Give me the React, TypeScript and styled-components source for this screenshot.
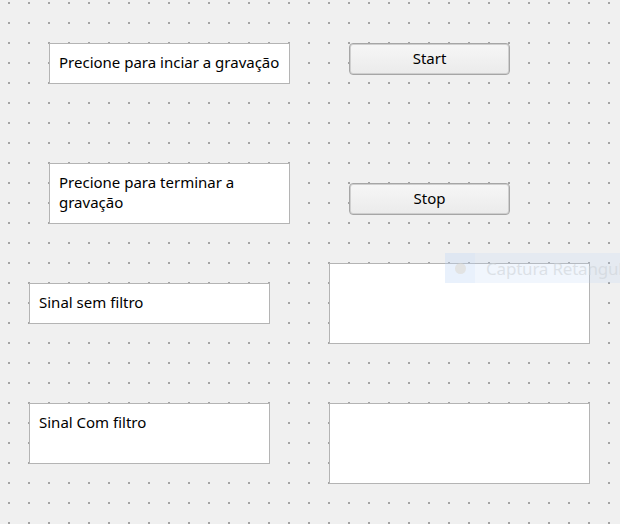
import React from "react";
import styled, { createGlobalStyle } from "styled-components";

const Global = createGlobalStyle`
  html, body {
    margin: 0;
    padding: 0;
    overflow: hidden;
    background: #f0f0f0;
  }
  * { box-sizing: border-box; }
`;

const Canvas = styled.div`
  position: relative;
  width: 620px;
  height: 524px;
  overflow: hidden;
  display: flex;
  flex-direction: column;
  padding-top: 43px;
  font-family: "Segoe UI", "Noto Sans", "Open Sans", sans-serif;
  background-color: #f0f0f0;
  background-image:
    linear-gradient(to bottom, transparent 2px, #f0f0f0 2px),
    linear-gradient(to right, #a4a4a4 2px, transparent 2px);
  background-size: 20px 20px, 20px 20px;
  background-position: 8px 2px, 8px 2px;
`;

const Row = styled.div<{ $indent: number; $top: number }>`
  display: flex;
  align-items: flex-start;
  gap: 59px;
  margin-left: ${(p) => p.$indent}px;
  margin-top: ${(p) => p.$top}px;
`;

const Label = styled.div<{ $h: number; $offset?: number }>`
  width: 241px;
  height: ${(p) => p.$h}px;
  margin-top: ${(p) => p.$offset ?? 0}px;
  background: #ffffff;
  border: 1px solid #b4b4b4;
  padding: 8px 4px 0 9px;
  font-size: 15px;
  line-height: 20px;
  color: #000000;
`;

const Button = styled.button<{ $offset?: number }>`
  width: 161px;
  height: 32px;
  margin-top: ${(p) => p.$offset ?? 0}px;
  border: 1px solid #a6a6a6;
  border-radius: 4px;
  box-shadow: inset 0 0 0 1px #cfcfcf;
  background: linear-gradient(#f6f6f6, #ebebeb);
  font-family: inherit;
  font-size: 15px;
  color: #000000;
  padding: 0 0 2px;
`;

const Panel = styled.div`
  width: 261px;
  height: 81px;
  background: #ffffff;
  border: 1px solid #b4b4b4;
`;

const Tooltip = styled.div`
  position: absolute;
  left: 445px;
  top: 253px;
  width: 200px;
  height: 30px;
  display: flex;
  align-items: center;
  background: rgba(185, 212, 245, 0.2);
  pointer-events: none;
`;

const TipIcon = styled.div`
  width: 30px;
  height: 30px;
  display: flex;
  align-items: center;
  justify-content: center;
  background: rgba(190, 215, 245, 0.15);
  &::after {
    content: "";
    width: 11px;
    height: 11px;
    border-radius: 50%;
    background: rgba(220, 215, 205, 0.55);
  }
`;

const TipText = styled.span`
  margin-left: 11px;
  font-size: 17px;
  letter-spacing: -0.2px;
  color: rgba(205, 210, 215, 0.6);
  white-space: nowrap;
`;

export default function App() {
  return (
    <>
      <Global />
      <Canvas>
        <Row $indent={49} $top={0}>
          <Label $h={41}>Precione para inciar a gravação</Label>
          <Button>Start</Button>
        </Row>
        <Row $indent={49} $top={79}>
          <Label $h={61}>Precione para terminar a gravação</Label>
          <Button $offset={20}>Stop</Button>
        </Row>
        <Row $indent={29} $top={39}>
          <Label $h={41} $offset={20}>
            Sinal sem filtro
          </Label>
          <Panel />
        </Row>
        <Row $indent={29} $top={59}>
          <Label $h={61}>Sinal Com filtro</Label>
          <Panel />
        </Row>
        <Tooltip>
          <TipIcon />
          <TipText>Captura Retangular</TipText>
        </Tooltip>
      </Canvas>
    </>
  );
}
